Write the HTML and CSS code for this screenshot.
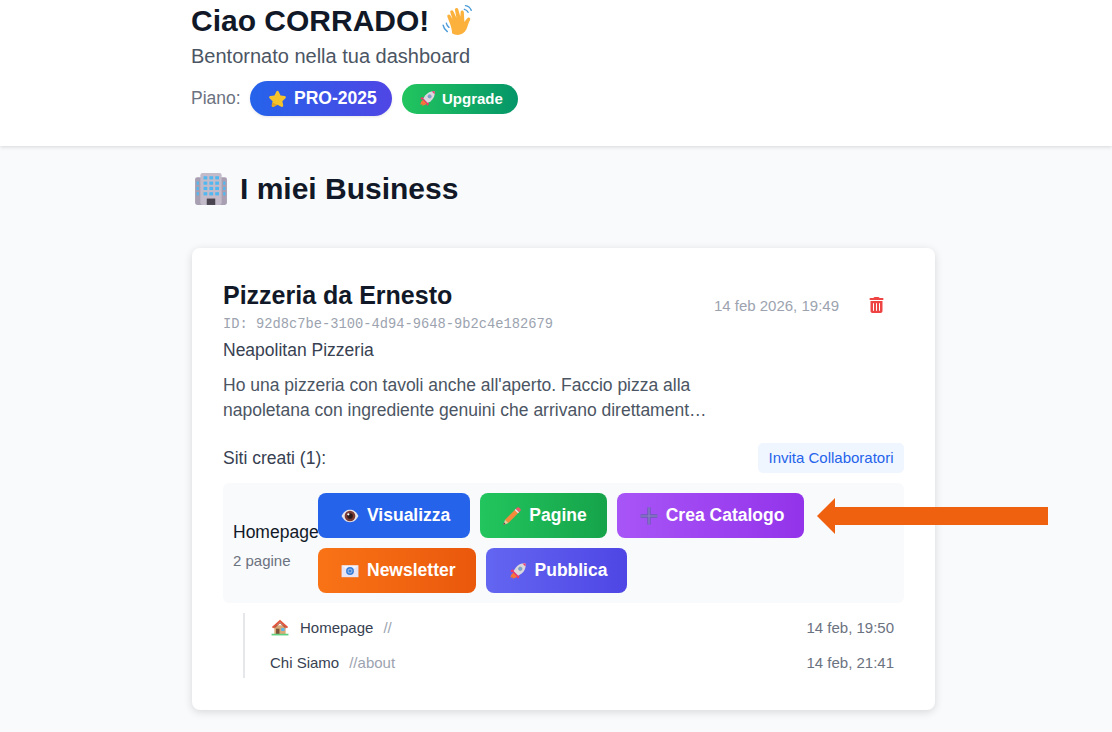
FILE: index.html
```html
<!DOCTYPE html>
<html lang="it">
<head>
  <meta charset="UTF-8">
  <meta name="viewport" content="width=device-width, initial-scale=1.0">
  <title>Dashboard</title>
  <link rel="stylesheet" href="styles.css">
</head>
<body>
  <svg class="sprites" width="0" height="0">
    <defs>
      <symbol id="wave" viewBox="0 0 32 32">
        <path d="M2 20c.5 2.500 1.800 4.500 4 6M5 18c.4 1.800 1.200 3 2.500 4M23 1.500c2.500.3 4.500 2 5.500 4.500M22 5c1.500.3 2.800 1.300 3.500 2.800" fill="none" stroke="#4a9bd9" stroke-width="1.300" stroke-linecap="round"/>
        <path d="M9 20 6 12c-.7-1.900 1.900-3 2.900-1.100l2 3.600L8.800 8c-.6-1.900 2-2.900 2.900-1l2.800 6-1.400-7.500c-.3-2 2.500-2.600 3.100-.6l2 7.100.3-4.500c.2-2 2.900-1.900 3 .1l.5 9.400c1-1.400 2-2.800 3-3.800 1.400-1.300 3.200.3 2.300 1.900-1.600 2.800-2.200 6-3.500 9-2.300 5-9 6.500-13.400 3.500C10.500 26.300 10 23 9 20z" fill="#fbb13c"/>
      </symbol>
      <symbol id="star" viewBox="0 0 32 32">
        <path d="M16 3c1 0 1.700.6 2.100 1.500l3 6.500 7 .9c2 .3 2.700 2.500 1.300 3.800l-5.200 4.800 1.400 7c.4 2-1.600 3.400-3.300 2.400L16 26.400l-6.300 3.500c-1.700 1-3.700-.4-3.300-2.400l1.400-7-5.200-4.800c-1.400-1.300-.7-3.500 1.300-3.800l7-.9 3-6.500C14.300 3.600 15 3 16 3z" fill="#f5c42c"/>
        <path d="M16 26.400l-6.300 3.500c-1.700 1-3.700-.4-3.300-2.400l1-5c3 2 6 3 8.600 3.900z" fill="#e0a526"/>
      </symbol>
      <symbol id="rocket" viewBox="0 0 32 32">
        <path d="M8 19c-3 1-5 4-5.500 9 2-.5 3-1 4-1-.3 1-.3 1.800-.5 2.500 5-.5 8-2.500 9-5.500z" fill="#f8733a"/>
        <path d="M7 13l-4.500 2 1.500 3 6-1zM19 25l-2 4.500-3-1.500 1-6z" fill="#f0386b"/>
        <path d="M29.500 2.500c-7-.5-13 2-18 8l-3.500 6 8 8 6-3.500c6-5 8.500-11 7.500-18.500z" fill="#d9d7e0"/>
        <path d="M29.500 2.500c-1.800-.1-3.700 0-5.500.5 1.500 1 3.800 3.300 5 5 .7-1.800.7-3.700.5-5.500z" fill="#f0386b"/>
        <circle cx="20" cy="12" r="3.200" fill="#6fa8dc" stroke="#8d8a99" stroke-width="1"/>
        <path d="M8 16l8 8 -2 1.500L6.500 18z" fill="#f0386b"/>
      </symbol>
      <symbol id="building" viewBox="0 0 32 32">
        <rect x="1" y="5" width="30" height="26" rx="2" fill="#a99fb3"/>
        <rect x="6" y="1" width="20" height="30" rx="2" fill="#c3bbc9"/>
        <g fill="#4fb8f0">
          <rect x="9" y="4" width="3.500" height="3"/><rect x="14.500" y="4" width="3.500" height="3"/><rect x="20" y="4" width="3.500" height="3"/>
          <rect x="9" y="9" width="3.500" height="3"/><rect x="14.500" y="9" width="3.500" height="3"/><rect x="20" y="9" width="3.500" height="3"/>
          <rect x="9" y="14" width="3.500" height="3"/><rect x="14.500" y="14" width="3.500" height="3"/><rect x="20" y="14" width="3.500" height="3"/>
          <rect x="9" y="19" width="3.500" height="3"/><rect x="14.500" y="19" width="3.500" height="3"/><rect x="20" y="19" width="3.500" height="3"/>
          <rect x="2.500" y="9" width="2" height="3"/><rect x="2.500" y="14" width="2" height="3"/><rect x="2.500" y="19" width="2" height="3"/>
          <rect x="27.500" y="9" width="2" height="3"/><rect x="27.500" y="14" width="2" height="3"/><rect x="27.500" y="19" width="2" height="3"/>
        </g>
        <rect x="12" y="25" width="8" height="6" fill="#4a4450"/>
      </symbol>
      <symbol id="eye" viewBox="0 0 32 32">
        <path d="M1 16C5 8 10 5 16 5s11 3 15 11c-4 8-9 11-15 11S5 24 1 16z" fill="#e8e4e8"/>
        <circle cx="16" cy="16" r="9.500" fill="#7a3b34"/>
        <circle cx="16" cy="16" r="5" fill="#2a1a1c"/>
        <circle cx="13" cy="13" r="2" fill="#fff"/>
      </symbol>
      <symbol id="pencil" viewBox="3 2 27 27">
        <path d="M22 5l5 5L11 26l-5-5z" fill="#f58a3c"/>
        <path d="M24 3c1-1 2.500-1 3.500 0l1.500 1.500c1 1 1 2.500 0 3.500l-2 2-5-5z" fill="#f0596a"/>
        <path d="M22 5l5 5-1.500 1.500-5-5z" fill="#e8e4e8"/>
        <path d="M6 21l5 5-7.500 3z" fill="#f3c9a0"/>
        <path d="M4.500 25l2.500 2.500-3.500 1.500z" fill="#5a4a48"/>
      </symbol>
      <symbol id="plus" viewBox="0 0 32 32">
        <path d="M13 1h6v12h12v6H19v12h-6V19H1v-6h12z" fill="#6c5bb5"/>
        <path d="M15 1h2v14h14v2H17v14h-2V17H1v-2h14z" fill="#8f83c9"/>
      </symbol>
      <symbol id="mail" viewBox="0 0 32 32">
        <rect x="1" y="6" width="30" height="21" fill="#e6e4f5"/>
        <path d="M1 6l15 11L31 6z" fill="#f4f3fb"/>
        <circle cx="16" cy="16" r="7" fill="#3d7fd6"/>
        <circle cx="16" cy="16" r="3.500" fill="none" stroke="#bcd6f5" stroke-width="1.300"/>
      </symbol>
      <symbol id="house" viewBox="0 0 32 32">
        <rect x="6" y="13" width="20" height="16" fill="#d9a877"/>
        <path d="M16 3 1.500 16l2.500 2L16 7.500 28 18l2.500-2z" fill="#e2553c"/>
        <path d="M16 7.500 6 16.500v2L16 9.500l10 9v-2z" fill="#a8432f"/>
        <rect x="9" y="19" width="6" height="10" fill="#7a5238"/>
        <rect x="18" y="18" width="6" height="5" fill="#55b7ee"/>
        <rect x="1" y="28" width="30" height="3" fill="#5fd07e"/>
      </symbol>
    </defs>
  </svg>

  <header class="top">
    <div class="wrap">
      <h1 class="hello">Ciao CORRADO! <svg class="emoji hello-emoji"><use href="#wave"/></svg></h1>
      <p class="welcome">Bentornato nella tua dashboard</p>
      <div class="plan">
        <span class="plan-label">Piano:</span>
        <span class="pill pill-pro"><svg class="emoji"><use href="#star"/></svg>PRO-2025</span>
        <span class="pill pill-up"><svg class="emoji"><use href="#rocket"/></svg>Upgrade</span>
      </div>
    </div>
  </header>

  <main class="wrap">
    <h2 class="section-title"><svg class="emoji section-emoji"><use href="#building"/></svg>I miei Business</h2>

    <section class="card">
      <div class="card-head">
        <div class="card-info">
          <h3 class="biz-name">Pizzeria da Ernesto</h3>
          <p class="biz-id">ID: 92d8c7be-3100-4d94-9648-9b2c4e182679</p>
          <p class="biz-type">Neapolitan Pizzeria</p>
          <p class="biz-desc">Ho una pizzeria con tavoli anche all'aperto. Faccio pizza alla napoletana con ingrediente genuini che arrivano direttament…</p>
        </div>
        <div class="card-meta">
          <span class="biz-date">14 feb 2026, 19:49</span>
          <svg class="trash" viewBox="0 0 448 512"><path fill="#ef4444" d="M135 17.700C140.400 6.800 151.500 0 163.600 0h120.800c12.100 0 23.200 6.800 28.600 17.700L320 32h96c17.700 0 32 14.300 32 32s-14.300 32-32 32H32C14.300 96 0 81.700 0 64s14.300-32 32-32h96l7-14.300zM32 128h384v320c0 35.300-28.700 64-64 64H96c-35.300 0-64-28.700-64-64V128zm96 64c-8.800 0-16 7.200-16 16v224c0 8.800 7.200 16 16 16s16-7.200 16-16V208c0-8.800-7.200-16-16-16zm96 0c-8.800 0-16 7.200-16 16v224c0 8.800 7.200 16 16 16s16-7.200 16-16V208c0-8.800-7.200-16-16-16zm96 0c-8.800 0-16 7.200-16 16v224c0 8.800 7.200 16 16 16s16-7.200 16-16V208c0-8.800-7.200-16-16-16z"/></svg>
        </div>
      </div>

      <div class="sites-head">
        <span class="sites-count">Siti creati (1):</span>
        <a class="invite">Invita Collaboratori</a>
      </div>

      <div class="site-row">
        <div class="site-label">
          <div class="site-name">Homepage</div>
          <div class="site-pages">2 pagine</div>
        </div>
        <div class="actions">
          <a class="btn btn-blue"><svg class="emoji"><use href="#eye"/></svg>Visualizza</a>
          <a class="btn btn-green"><svg class="emoji"><use href="#pencil"/></svg>Pagine</a>
          <a class="btn btn-purple"><svg class="emoji"><use href="#plus"/></svg>Crea Catalogo</a>
          <a class="btn btn-orange"><svg class="emoji"><use href="#mail"/></svg>Newsletter</a>
          <a class="btn btn-indigo"><svg class="emoji"><use href="#rocket"/></svg>Pubblica</a>
        </div>
      </div>

      <ul class="pages">
        <li class="page">
          <svg class="emoji page-emoji"><use href="#house"/></svg>
          <span class="page-name">Homepage</span>
          <span class="page-path">//</span>
          <span class="page-date">14 feb, 19:50</span>
        </li>
        <li class="page">
          <span class="page-name">Chi Siamo</span>
          <span class="page-path">//about</span>
          <span class="page-date">14 feb, 21:41</span>
        </li>
      </ul>
    </section>
  </main>

  <svg class="arrow" width="231" height="36" viewBox="0 0 231 36"><path d="M0 18 18 0v9h213v18H18v9z" fill="#ef610f"/></svg>
</body>
</html>
```

FILE: styles.css
```css
* {
  box-sizing: border-box;
}
html, body {
  margin: 0;
  padding: 0;
}
body {
  font-family: 'Liberation Sans', Arial, sans-serif;
  background-color: #f9fafb;
  color: #111827;
  overflow: hidden;
  height: 732px;
}
h1, h2, h3, p, ul {
  margin: 0;
  padding: 0;
}
.sprites {
  position: absolute;
}
.wrap {
  width: 744px;
  margin-left: 191px;
}
.emoji {
  width: 18px;
  height: 18px;
  flex: none;
}

/* header */
.top {
  background-color: #fff;
  height: 146px;
  padding-top: 3px;
  box-shadow: 0 1px 4px rgba(0, 0, 0, 0.14);
}
.hello {
  display: flex;
  align-items: center;
  gap: 12px;
  font-size: 30px;
  line-height: 36px;
  height: 36px;
  font-weight: 700;
}
.hello-emoji {
  width: 34px;
  height: 34px;
}
.welcome {
  font-size: 20px;
  line-height: 28px;
  color: #4b5563;
  margin-top: 3px;
}
.plan {
  display: flex;
  align-items: center;
  margin-top: 11px;
  height: 35px;
}
.plan-label {
  font-size: 17.500px;
  color: #6b7280;
  width: 59px;
}
.pill {
  display: flex;
  align-items: center;
  color: #fff;
  font-weight: 700;
  border-radius: 999px;
}
.pill-pro {
  height: 35px;
  width: 142px;
  padding-left: 18px;
  font-size: 17.500px;
  gap: 7px;
  background: linear-gradient(90deg, #2563eb, #4f46e5);
  box-shadow: 0 1px 3px rgba(0, 0, 0, 0.1);
}
.pill-pro .emoji {
  width: 19px;
  height: 19px;
}
.pill-up {
  height: 30px;
  width: 116px;
  margin-left: 10px;
  padding-left: 17px;
  font-size: 15px;
  gap: 6px;
  background: linear-gradient(90deg, #22c55e, #059669);
}
.pill-up .emoji {
  width: 17px;
  height: 17px;
}

/* business */
.section-title {
  display: flex;
  align-items: center;
  font-size: 30px;
  line-height: 36px;
  font-weight: 700;
  margin-top: 25px;
  padding-left: 3px;
  gap: 12px;
}
.section-emoji {
  width: 34px;
  height: 34px;
}
.card {
  margin-top: 41px;
  margin-left: 1px;
  width: 743px;
  height: 462px;
  padding: 30px 31px;
  background-color: #fff;
  border-radius: 8px;
  box-shadow: 0 2px 8px rgba(0, 0, 0, 0.14);
}
.card-head {
  display: flex;
  justify-content: space-between;
}
.card-info {
  width: 490px;
}
.biz-name {
  font-size: 25px;
  line-height: 34px;
  font-weight: 700;
}
.biz-id {
  font-family: 'Liberation Mono', monospace;
  font-size: 13.750px;
  line-height: 16px;
  color: #9ca3af;
  margin-top: 5px;
}
.biz-type {
  font-size: 17.500px;
  line-height: 24px;
  color: #374151;
  margin-top: 5px;
}
.biz-desc {
  font-size: 17.500px;
  line-height: 25px;
  color: #4b5563;
  margin-top: 11px;
}
.card-meta {
  display: flex;
  align-items: center;
  height: 18px;
  margin-top: 18px;
  padding-right: 20px;
}
.biz-date {
  font-size: 15px;
  color: #9ca3af;
}
.trash {
  width: 15px;
  height: 16px;
  margin-left: 30px;
}
.sites-head {
  display: flex;
  justify-content: space-between;
  align-items: center;
  margin-top: 20px;
}
.sites-count {
  font-size: 17.500px;
  color: #374151;
}
.invite {
  font-size: 15px;
  line-height: 30px;
  width: 146px;
  text-align: center;
  color: #2563eb;
  background-color: #eff6ff;
  border-radius: 5px;
}
.site-row {
  display: flex;
  align-items: center;
  margin-top: 10px;
  padding: 10px;
  background-color: #f9fafb;
  border-radius: 6px;
}
.site-label {
  width: 85px;
  flex: none;
  padding-top: 2px;
}
.site-name {
  font-size: 17.500px;
  line-height: 24px;
  color: #111827;
}
.site-pages {
  font-size: 15px;
  color: #6b7280;
  margin-top: 8px;
}
.actions {
  display: flex;
  flex-wrap: wrap;
  gap: 10px;
  width: 566px;
}
.btn {
  display: flex;
  align-items: center;
  gap: 8px;
  height: 45px;
  padding: 0 20px 0 23px;
  color: #fff;
  font-size: 17.500px;
  font-weight: 700;
  border-radius: 8px;
}
.btn-blue {
  background-color: #2563eb;
}
.btn-green {
  background: linear-gradient(90deg, #22c55e, #16a34a);
}
.btn-purple {
  background: linear-gradient(90deg, #a855f7, #9333ea);
}
.btn-orange {
  background: linear-gradient(90deg, #f97316, #ea580c);
}
.btn-indigo {
  background: linear-gradient(90deg, #6366f1, #4f46e5);
}

/* pages list */
.pages {
  list-style: none;
  display: flex;
  flex-direction: column;
  gap: 5px;
  margin: 10px 0 0 20px;
  border-left: 2px solid #e5e7eb;
}
.page {
  display: flex;
  align-items: center;
  height: 30px;
  padding: 0 10px 2px 25px;
  font-size: 15px;
}
.page-emoji {
  margin-left: 1px;
  margin-right: 11px;
}
.page-name {
  color: #374151;
}
.page-path {
  color: #9ca3af;
  margin-left: 10px;
}
.page-date {
  margin-left: auto;
  color: #6b7280;
}

/* annotation over the screenshot */
.arrow {
  position: absolute;
  left: 817px;
  top: 498px;
}
```
